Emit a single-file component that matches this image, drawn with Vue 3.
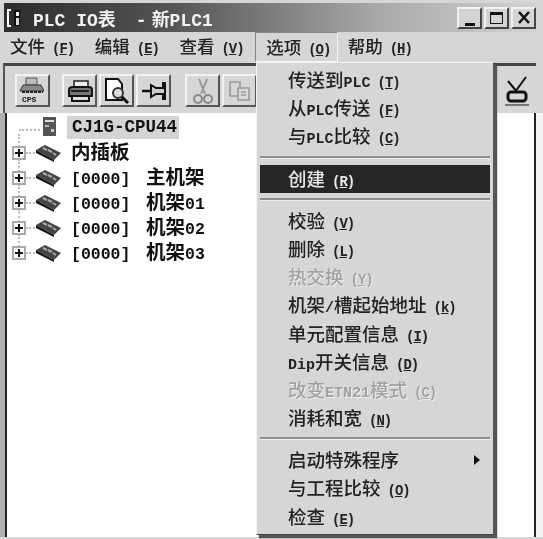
<script setup>
const menus = [
  { label: '文件', key: 'F' },
  { label: '编辑', key: 'E' },
  { label: '查看', key: 'V' },
  { label: '选项', key: 'O', open: true },
  { label: '帮助', key: 'H' },
]

// 选项 menu, groups are split by a separator
const groups = [
  [
    { label: '传送到PLC', key: 'T' },
    { label: '从PLC传送', key: 'F' },
    { label: '与PLC比较', key: 'C' },
  ],
  [{ label: '创建', key: 'R', active: true }],
  [
    { label: '校验', key: 'V' },
    { label: '删除', key: 'L' },
    { label: '热交换', key: 'Y', off: true },
    { label: '机架/槽起始地址', key: 'k' },
    { label: '单元配置信息', key: 'I' },
    { label: 'Dip开关信息', key: 'D' },
    { label: '改变ETN21模式', key: 'C', off: true },
    { label: '消耗和宽', key: 'N' },
  ],
  [
    { label: '启动特殊程序', sub: true },
    { label: '与工程比较', key: 'O' },
    { label: '检查', key: 'E' },
  ],
]

const racks = [
  { name: '内插板' },
  { addr: '[0000]', name: '主机架' },
  { addr: '[0000]', name: '机架01' },
  { addr: '[0000]', name: '机架02' },
  { addr: '[0000]', name: '机架03' },
]

// latin runs use the narrow bold mono, the rest stays in the CJK font
const parts = (s) => s.split(/([A-Za-z0-9/]+)/).filter(Boolean).map(t => ({ t, lat: /^[A-Za-z0-9/]/.test(t) }))
</script>

<template>
  <div class="win">
    <div class="title">
      <svg class="app-icon" width="22" height="22" viewBox="0 0 22 22">
        <path d="M5 3H2v16h3" fill="none" stroke="#fff" stroke-width="2" />
        <rect x="8" y="3" width="6" height="16" fill="#111" />
        <rect x="10" y="5" width="3" height="4" fill="#eee" />
        <rect x="10" y="11" width="3" height="7" fill="#ddd" />
      </svg>
      <span class="title-text">PLC IO表<span class="title-dash">-</span><span class="title-doc">新PLC1</span></span>
      <div class="caps">
        <button class="cap"><i class="cap-min"></i></button>
        <button class="cap"><i class="cap-max"></i></button>
        <button class="cap">
          <svg width="14" height="13" viewBox="0 0 14 13"><path d="M2 1l10 11M12 1L2 12" stroke="#111" stroke-width="2.6" /></svg>
        </button>
      </div>
    </div>

    <div class="menubar">
      <div v-for="m in menus" :key="m.label" class="menu" :class="{ open: m.open }">
        <span>{{ m.label }}</span><span class="paren">(<u>{{ m.key }}</u>)</span>
      </div>
    </div>

    <div class="toolbar">
      <button class="tool">
        <svg width="28" height="27" viewBox="0 0 28 27">
          <path d="M7 1h11v7H7z" fill="#bbb" stroke="#555" />
          <path d="M4 8h18l3 6H1z" fill="#888" stroke="#333" />
          <path d="M3 15h21" stroke="#222" stroke-width="2" stroke-dasharray="3 1" />
          <text x="3" y="25" class="cps">CPS</text>
        </svg>
      </button>
      <button class="tool gap-l">
        <svg width="28" height="24" viewBox="0 0 28 24">
          <path d="M8 2h14v6H8z" fill="#eee" stroke="#222" stroke-width="1.5" />
          <path d="M3 11c0-2 2-3 4-3h16c2 0 3 1 3 3v6H3z" fill="#777" stroke="#111" stroke-width="2" />
          <path d="M6 17h17v5H6z" fill="#ddd" stroke="#111" stroke-width="2" />
          <path d="M5 12h18" stroke="#222" stroke-width="2" />
        </svg>
      </button>
      <button class="tool">
        <svg width="28" height="28" viewBox="0 0 28 28">
          <path d="M3 2h12l4 5v16H3z" fill="#fff" stroke="#111" stroke-width="2" />
          <circle cx="15" cy="16" r="5" fill="#ddd" stroke="#333" stroke-width="2" />
          <path d="M19 20l6 6" stroke="#111" stroke-width="3" />
        </svg>
      </button>
      <button class="tool">
        <svg width="26" height="22" viewBox="0 0 26 22">
          <path d="M1 11h9" stroke="#111" stroke-width="2.5" />
          <path d="M10 5l5 3h7V3h2v16h-2v-5h-7l-5 3z" fill="#ccc" stroke="#111" stroke-width="2" />
        </svg>
      </button>
      <button class="tool gap-x">
        <svg width="22" height="28" viewBox="0 0 22 28">
          <path d="M7 2l6 15M15 2L9 17" stroke="#999" stroke-width="2" />
          <circle cx="6" cy="22" r="4" fill="none" stroke="#888" stroke-width="2" />
          <circle cx="16" cy="22" r="4" fill="none" stroke="#888" stroke-width="2" />
        </svg>
      </button>
      <button class="tool">
        <svg width="26" height="24" viewBox="0 0 26 24" fill="none" stroke="#999" stroke-width="1.6">
          <path d="M3 3h10v14H3z" />
          <path d="M11 9h11v12H11z" fill="#d8d8d8" />
          <path d="M14 13h5M14 16h5" />
        </svg>
      </button>
      <div class="tool-end">
        <svg width="26" height="30" viewBox="0 0 26 30" fill="none" stroke="#111">
          <path d="M4 5l9 11M22 1L11 16" stroke-width="2" />
          <rect x="4" y="16" width="18" height="9" rx="3" stroke-width="3" />
          <path d="M1 29h24" stroke="#777" stroke-width="2" />
        </svg>
      </div>
    </div>

    <div class="tree">
      <div class="row root">
        <span class="stem-root"></span>
        <svg class="plc" width="18" height="20" viewBox="0 0 18 20">
          <rect x="3" y="0" width="13" height="19" fill="#555" />
          <rect x="5" y="3" width="9" height="2" fill="#ddd" />
          <rect x="5" y="8" width="4" height="2" fill="#bbb" />
          <rect x="11" y="12" width="3" height="3" fill="#ccc" />
        </svg>
        <span class="sel">CJ1G-CPU44</span>
      </div>
      <div v-for="r in racks" :key="r.addr + r.name" class="row">
        <span class="expander"></span>
        <span class="link"></span>
        <svg class="rack" width="27" height="18" viewBox="0 0 27 18">
          <path d="M1 6l9-5 16 8-7 7z" fill="#444" />
          <path d="M1 6l18 10v2L1 9z" fill="#111" />
          <path d="M8 4l4 2M13 6l4 2M18 9l3 2" stroke="#aaa" stroke-width="2" />
        </svg>
        <div class="label">
          <span v-if="r.addr" class="addr">{{ r.addr }}</span>
          <span v-for="p in parts(r.name)" :key="p.t" :class="p.lat ? 'digits' : 'name'">{{ p.t }}</span>
        </div>
      </div>
    </div>

    <div class="dropdown">
      <template v-for="(g, i) in groups" :key="i">
        <div v-if="i > 0" class="sep"></div>
        <div
          v-for="it in g"
          :key="it.label"
          class="item"
          :class="{ active: it.active, off: it.off }"
        >
          <span v-for="p in parts(it.label)" :key="p.t" :class="{ lat: p.lat }">{{ p.t }}</span>
          <span v-if="it.key" class="paren">(<u>{{ it.key }}</u>)</span>
          <i v-if="it.sub" class="arrow"></i>
        </div>
      </template>
    </div>
  </div>
</template>

<style>
html, body { margin: 0; background: #fff; }
</style>

<style scoped>
.win {
  position: relative;
  width: 543px;
  height: 539px;
  overflow: hidden;
  box-sizing: border-box;
  padding-top: 3px;
  background: #d6d6d6;
  font-family: "Liberation Mono", "Noto Sans CJK SC", monospace;
  color: #1a1a1a;
  filter: blur(0.55px);
}
button { padding: 0; font: inherit; }

.title {
  height: 29px;
  margin: 0 7px 0 4px;
  padding-left: 2px;
  display: flex;
  align-items: center;
  background: linear-gradient(90deg, #2c2c2c 0%, #555 32%, #a8a8a8 70%, #d2d2d2 100%);
  box-sizing: border-box;
}
.app-icon { margin-right: 5px; flex: none; }
.title-text {
  color: #f2f2f2;
  font-size: 18px;
  font-weight: 700;
  white-space: pre;
}
.title-dash { margin-left: 20px; }
.title-doc { margin-left: 5px; }
.caps { margin-left: auto; display: flex; gap: 2px; }
.cap {
  width: 25px;
  height: 22px;
  background: #d4d4d4;
  border: 2px solid;
  border-color: #f2f2f2 #444 #444 #f2f2f2;
  display: flex;
  align-items: center;
  justify-content: center;
  box-sizing: border-box;
}
.cap-min { width: 10px; height: 3px; background: #111; align-self: flex-end; margin-bottom: 1px; }
.cap-max { width: 13px; height: 12px; border: 1px solid #111; border-top-width: 3px; box-sizing: border-box; }

.menubar {
  height: 30px;
  padding-left: 10px;
  display: flex;
  align-items: center;
  gap: 20.5px;
  font-family: "Noto Sans CJK SC", sans-serif;
  font-size: 17.5px;
  font-weight: 500;
  color: #222;
  white-space: nowrap;
}
.menu { line-height: 30px; }
.menu.open {
  width: 83px;
  margin: 0 -11px 0 -9px;
  padding-left: 10px;
  box-sizing: border-box;
  height: 30px;
  border: 1px solid;
  border-color: #888 #f4f4f4 #f4f4f4 #888;
  line-height: 28px;
}
.paren {
  font-family: "Liberation Mono", monospace;
  font-size: 14px;
  font-weight: 700;
  letter-spacing: -1px;
  margin-left: 7px;
}

.toolbar {
  height: 50px;
  margin: 1px 7px 0 3px;
  padding: 8px 0 0 10px;
  box-sizing: border-box;
  display: flex;
  align-items: flex-start;
  gap: 2px;
  border-top: 3px solid #444;
  border-left: 2px solid #555;
}
.tool {
  width: 35px;
  height: 33px;
  background: #d6d6d6;
  border: 2px solid;
  border-color: #f2f2f2 #555 #555 #f2f2f2;
  display: flex;
  align-items: center;
  justify-content: center;
  box-sizing: border-box;
}
.gap-l { margin-left: 10px; }
.gap-x { margin-left: 12px; }
.cps { font-size: 8px; font-weight: 700; fill: #111; }
.tool-end { margin-left: auto; margin-right: 6px; height: 34px; display: flex; align-items: center; }

.tree {
  height: 424px;
  margin: 0 7px 0 5px;
  padding: 1px 0 0 5px;
  box-sizing: border-box;
  background: #fff;
  border-left: 2px solid #222;
  border-right: 2px solid #222;
  box-shadow: -5px 0 0 #b0b0b0, 7px 0 0 #f4f4f4;
}
.row {
  height: 25px;
  display: flex;
  align-items: center;
  position: relative;
  font-size: 16.5px;
  font-weight: 700;
  color: #111;
  white-space: pre;
}
.row.root { height: 26px; }
.row:not(.root)::before {
  content: "";
  position: absolute;
  left: 6px;
  top: -6px;
  height: 25px;
  border-left: 2px dotted #bbb;
}
.stem-root { width: 21px; margin-left: 7px; border-top: 2px dotted #bbb; margin-top: 6px; flex: none; }
.plc { margin-right: 9px; flex: none; }
.sel { background: #d4d4d4; padding: 0 0 0 5px; width: 112px; box-sizing: border-box; font-size: 17.5px; line-height: 23px; }
.expander {
  width: 14px;
  height: 14px;
  box-sizing: border-box;
  border: 2px solid #aaa;
  background:
    linear-gradient(#111, #111) center / 8px 2px no-repeat,
    linear-gradient(#111, #111) center / 2px 8px no-repeat,
    #fff;
  flex: none;
  position: relative;
  z-index: 1;
}
.link { width: 9px; border-top: 2px dotted #bbb; flex: none; }
.rack { margin-right: 9px; flex: none; }
.label { line-height: 21px; margin-top: 3px; }
.addr { display: inline-block; width: 75px; }
.name { font-size: 19.5px; }
.digits { font-size: 16.5px; }

.dropdown {
  position: absolute;
  left: 256px;
  top: 62px;
  width: 238px;
  height: 473px;
  box-sizing: border-box;
  padding: 3px 3px 0;
  background: #d6d6d6;
  border: 1px solid;
  border-color: #f2f2f2 #555 #444 #f2f2f2;
  box-shadow: 3px 3px 1px #555;
  font-family: "Noto Sans CJK SC", sans-serif;
  font-size: 18.5px;
  font-weight: 500;
}
.item {
  height: 28.2px;
  line-height: 26px;
  padding-left: 28px;
  position: relative;
  white-space: pre;
  color: #222;
}
.lat { font-family: "Liberation Mono", monospace; font-size: 15px; font-weight: 700; }
.item.active { background: #262626; color: #e8e8e8; }
.item.off { color: #a2a2a2; text-shadow: 1px 1px 0 #efefef; }
.sep {
  height: 2px;
  margin: 5px 0 6px;
  background: #8f8f8f;
  border-bottom: 1px solid #efefef;
}
.arrow {
  position: absolute;
  right: 10px;
  top: 9px;
  border-left: 6px solid #111;
  border-top: 5px solid transparent;
  border-bottom: 5px solid transparent;
}
</style>
